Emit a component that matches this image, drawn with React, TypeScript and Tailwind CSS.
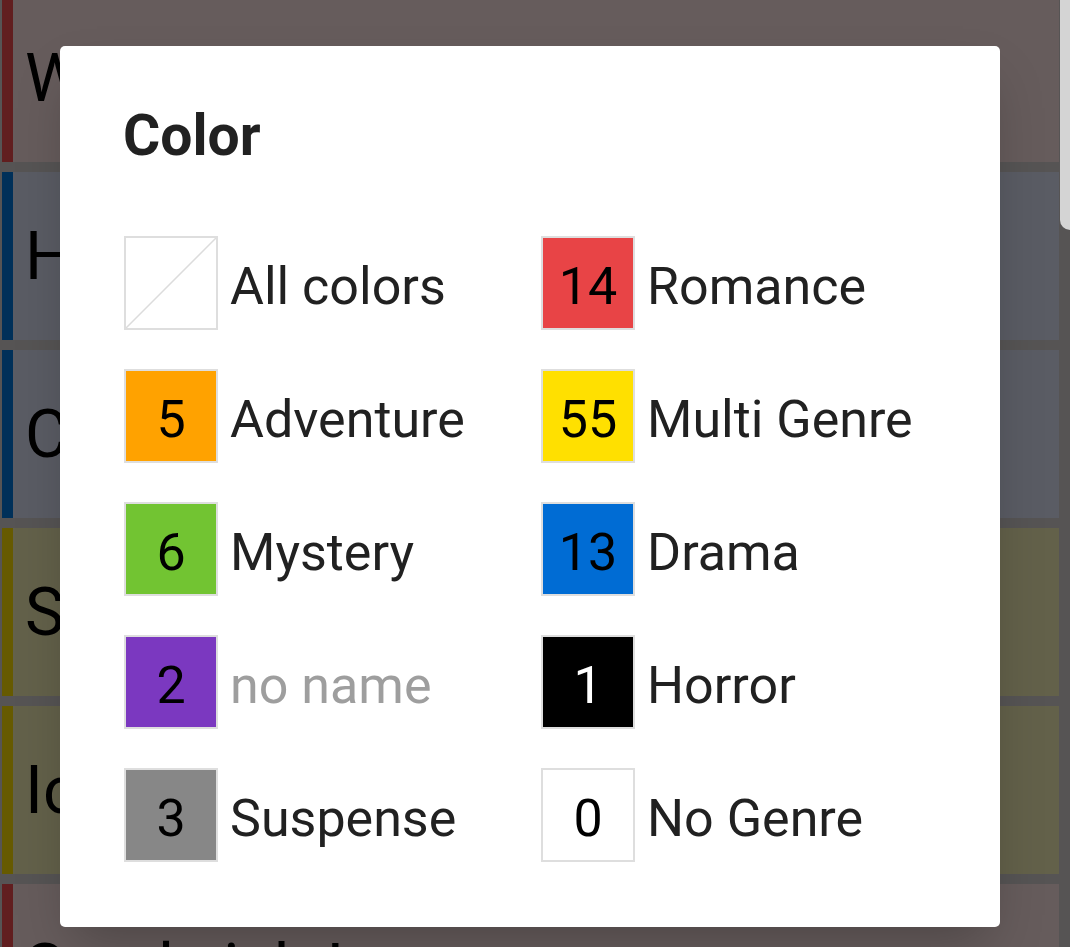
import React from 'react';

type Row = { title: string; stripe: string; bg: string };

const rows: Row[] = [
  { title: 'Wedding Night', stripe: 'bg-[#f24b4f]', bg: 'bg-[#ffe7e7]' },
  { title: 'Hidden Truth', stripe: 'bg-[#0078df]', bg: 'bg-[#e2e6fa]' },
  { title: 'Cold Harbor', stripe: 'bg-[#0078df]', bg: 'bg-[#e2e6fa]' },
  { title: 'Summer Story', stripe: 'bg-[#ffe100]', bg: 'bg-[#f7f2b8]' },
  { title: 'Ice Kingdom', stripe: 'bg-[#ffe100]', bg: 'bg-[#f7f2b8]' },
  { title: 'Sandwich Love', stripe: 'bg-[#f24b4f]', bg: 'bg-[#ffe7e7]' },
];

type Genre = { count?: number; name: string; swatch: string; numColor?: string; muted?: boolean; all?: boolean };

const genres: Genre[] = [
  { name: 'All colors', swatch: 'bg-white', all: true },
  { count: 14, name: 'Romance', swatch: 'bg-[#e84446]' },
  { count: 5, name: 'Adventure', swatch: 'bg-[#ffa200]' },
  { count: 55, name: 'Multi Genre', swatch: 'bg-[#ffe000]' },
  { count: 6, name: 'Mystery', swatch: 'bg-[#72c432]' },
  { count: 13, name: 'Drama', swatch: 'bg-[#006cd4]' },
  { count: 2, name: 'no name', swatch: 'bg-[#7b38c0]', muted: true },
  { count: 1, name: 'Horror', swatch: 'bg-black', numColor: 'text-white' },
  { count: 3, name: 'Suspense', swatch: 'bg-[#878787]' },
  { count: 0, name: 'No Genre', swatch: 'bg-white' },
];

const Swatch: React.FC<{ g: Genre }> = ({ g }) => (
  <div
    className={`relative w-[94px] h-[94px] shrink-0 border-2 border-[#dedede] flex items-center justify-center ${g.swatch}`}
  >
    {g.all ? (
      <svg viewBox="0 0 90 90" className="absolute inset-0 w-full h-full" preserveAspectRatio="none">
        <line x1="0" y1="90" x2="90" y2="0" stroke="#dcdcdc" strokeWidth="1.5" />
      </svg>
    ) : (
      <span className={`pt-[7px] text-[52px] leading-none ${g.numColor ?? 'text-black'}`}>{g.count}</span>
    )}
  </div>
);

const App: React.FC = () => {
  return (
    <div
      className="relative w-[1070px] h-[947px] overflow-hidden bg-[#d8d2d2]"
      style={{ fontFamily: 'Roboto, "Noto Sans", sans-serif' }}
    >
      {/* list behind the dialog */}
      <div className="flex flex-col gap-[10px] -mt-[6px] pl-[2px] pr-[11px]">
        {rows.map((r, i) => (
          <div key={i} className={`flex h-[168px] shrink-0 ${r.bg}`}>
            <div className={`w-[11px] ${r.stripe}`} />
            <div className="flex items-center pl-[12px] text-[66px] text-black whitespace-nowrap">{r.title}</div>
          </div>
        ))}
      </div>

      {/* scrim + dialog */}
      <div className="absolute inset-0 bg-black/60 pt-[46px] pl-[60px]">
        <div className="w-[940px] h-[881px] bg-white rounded-[5px] pt-[60px] px-[64px] shadow-2xl">
          <h2 className="text-[57px] leading-[60px] font-bold text-[#212121] -ml-[1px]">Color</h2>
          <div className="mt-[70px] grid grid-cols-[417px_1fr] gap-y-[39px]">
            {genres.map((g) => (
              <div key={g.name} className="flex items-center gap-[12px]">
                <Swatch g={g} />
                <span
                  className={`pt-[8px] text-[52px] leading-none whitespace-nowrap ${
                    g.muted ? 'text-[#9e9e9e]' : 'text-[#212121]'
                  }`}
                >
                  {g.name}
                </span>
              </div>
            ))}
          </div>
        </div>
      </div>

      {/* scrollbar */}
      <div className="absolute top-0 right-0 w-[10px] h-[230px] bg-[#d4d4d4] rounded-bl-[10px]" />
    </div>
  );
};

export default App;
